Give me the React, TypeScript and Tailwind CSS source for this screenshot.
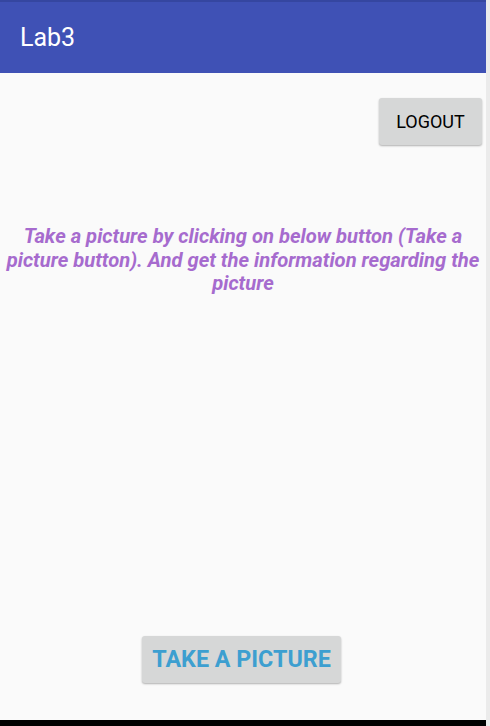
export default function App() {
    return (
        <div className="flex h-[726px] w-[490px] bg-[#ebebeb]" style={{ fontFamily: 'Roboto, "Liberation Sans", sans-serif' }}>
            <div className="flex w-[486px] flex-col">
                <header className="h-[73px] border-t-2 border-[#3546a0] bg-[#3f51b5] pl-5 pt-[21px]">
                    <h1 className="text-[25px] leading-[30px] text-white">Lab3</h1>
                </header>
                <main className="flex flex-1 flex-col bg-[#fafafa]">
                    <div className="flex justify-end pr-1 pt-[25px]">
                        <button className="h-[47px] w-[103px] rounded-[3px] bg-[#d6d7d7] text-[18px] font-normal text-black shadow-[0_1px_2px_rgba(0,0,0,0.3)]">
                            LOGOUT
                        </button>
                    </div>
                    <p className="mt-[80px] text-center text-[20.2px] font-bold italic leading-[23.5px] text-[#a66bce]">
                        Take a picture by clicking on below button (Take a picture button). And get the information regarding the picture
                    </p>
                    <div className="mt-auto flex justify-center pb-[37px] pr-[3px]">
                        <button className="h-[47px] w-[199px] rounded-[3px] bg-[#d6d7d7] text-[23.3px] font-bold text-[#3d9fd0] shadow-[0_1px_2px_rgba(0,0,0,0.3)]">
                            TAKE A PICTURE
                        </button>
                    </div>
                </main>
                <div className="h-[6px] bg-black" />
            </div>
        </div>
    );
}
